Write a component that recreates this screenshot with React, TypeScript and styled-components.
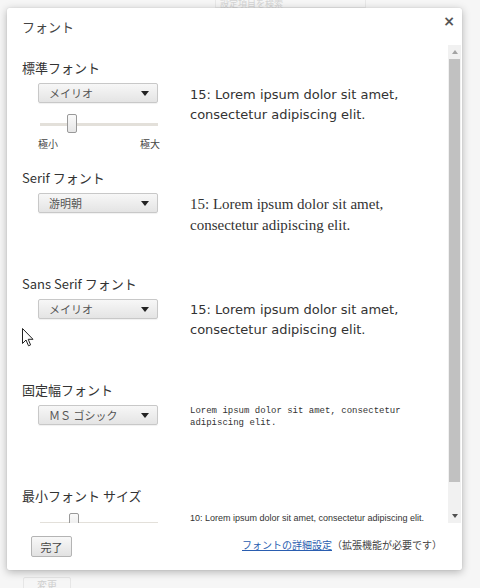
import React from 'react'
import styled, { createGlobalStyle } from 'styled-components'

const GlobalStyle = createGlobalStyle`
  html, body {
    margin: 0;
    padding: 0;
    background: #f6f6f6;
  }
  body {
    font-family: 'Noto Sans CJK JP', 'DejaVu Sans', sans-serif;
    color: #333;
  }
`

const jp = `'Noto Sans CJK JP', sans-serif`

const Page = styled.div`
  position: relative;
  width: 480px;
  height: 588px;
  overflow: hidden;
  padding: 8px 0 0 7px;
  box-sizing: border-box;
`

const BackSearch = styled.div`
  position: absolute;
  top: -6px;
  left: 215px;
  width: 145px;
  height: 12px;
  border: 1px solid #e8e8e8;
  font-family: ${jp};
  font-size: 9px;
  color: #d4d4d4;
  padding-left: 4px;
  line-height: 18px;
`

const BackButton = styled.div`
  position: absolute;
  top: 577px;
  left: 23px;
  width: 46px;
  height: 18px;
  border: 1px solid #e6e6e6;
  border-radius: 2px;
  font-family: ${jp};
  font-size: 10px;
  color: #cfcfcf;
  text-align: center;
  line-height: 14px;
`

const Dialog = styled.div`
  width: 455px;
  height: 562px;
  background: #fff;
  border-radius: 2px;
  box-shadow: 0 2px 8px rgba(0, 0, 0, 0.28), 0 0 1px rgba(0, 0, 0, 0.2);
  display: flex;
  flex-direction: column;
  position: relative;
`

const Header = styled.div`
  display: flex;
  justify-content: space-between;
  align-items: center;
  height: 37px;
  padding: 0 7px 0 15px;
`

const Title = styled.h1`
  margin: 0;
  font-family: ${jp};
  font-weight: normal;
  font-size: 13px;
  color: #444;
  margin-top: -1px;
`

const Close = styled.span`
  font-family: 'DejaVu Sans', sans-serif;
  font-weight: bold;
  font-size: 14px;
  color: #555;
  margin-top: -12px;
`

const Body = styled.div`
  display: flex;
  height: 478px;
`

const Scroller = styled.div`
  flex: 1;
  overflow: hidden;
  padding: 14px 0 0 15px;
`

const Section = styled.div<{ $height: number }>`
  height: ${(p) => p.$height}px;
`

const SectionTitle = styled.div`
  font-family: ${jp};
  font-size: 13px;
  color: #333;
  line-height: 18px;
`

const Row = styled.div`
  display: grid;
  grid-template-columns: 168px 1fr;
  margin-top: 6px;
`

const Controls = styled.div`
  padding-left: 16px;
`

const Select = styled.div`
  width: 120px;
  height: 20px;
  box-sizing: border-box;
  border: 1px solid #c8c8c8;
  border-radius: 2px;
  background: linear-gradient(#f7f7f7, #e4e4e4);
  display: flex;
  align-items: center;
  justify-content: space-between;
  padding: 0 8px 0 10px;
  font-family: ${jp};
  font-size: 11px;
  color: #555;
  box-shadow: 0 1px 1px rgba(0, 0, 0, 0.06);
`

const Arrow = styled.span`
  width: 0;
  height: 0;
  border-left: 4px solid transparent;
  border-right: 4px solid transparent;
  border-top: 5px solid #222;
`

const Slider = styled.div<{ $thumb: number; $top: number }>`
  position: relative;
  width: 120px;
  height: 20px;
  margin-top: ${(p) => p.$top}px;
  &::before {
    content: '';
    position: absolute;
    left: 2px;
    right: 0;
    top: 9px;
    height: 3px;
    background: #e3e0da;
  }
  &::after {
    content: '';
    position: absolute;
    left: ${(p) => p.$thumb}px;
    top: 0;
    width: 8px;
    height: 17px;
    border: 1px solid #999;
    border-radius: 2px;
    background: linear-gradient(#fafafa, #e6e6e6);
  }
`

const Ends = styled.div`
  display: flex;
  justify-content: space-between;
  width: 122px;
  font-family: ${jp};
  font-size: 10px;
  color: #444;
  margin-top: 2px;
`

const Sample = styled.div<{ $font: string; $size: number; $lh: number; $pt: number }>`
  font-family: ${(p) => p.$font};
  font-size: ${(p) => p.$size}px;
  line-height: ${(p) => p.$lh}px;
  padding-top: ${(p) => p.$pt}px;
  padding-right: 12px;
  color: #333;
`

const ScrollBar = styled.div`
  width: 13px;
  background: #f1f1f1;
  display: flex;
  flex-direction: column;
  margin-right: 1px;
`

const ScrollButton = styled.div<{ $down?: boolean }>`
  height: 14px;
  display: flex;
  align-items: center;
  justify-content: center;
  &::after {
    content: '';
    border-left: 3px solid transparent;
    border-right: 3px solid transparent;
    ${(p) => (p.$down ? 'border-top: 4px solid #505050;' : 'border-bottom: 4px solid #a3a3a3;')}
  }
`

const Thumb = styled.div`
  height: 423px;
  margin: 0 1px;
  background: #c1c1c1;
`

const Spacer = styled.div`
  flex: 1;
`

const Footer = styled.div`
  display: flex;
  align-items: center;
  justify-content: space-between;
  padding: 13px 20px 0 24px;
`

const Button = styled.button`
  width: 41px;
  height: 21px;
  padding: 0;
  border: 1px solid #b4b4b4;
  border-radius: 2px;
  background: linear-gradient(#f8f8f8, #e2e2e2);
  font-family: ${jp};
  font-size: 11px;
  color: #444;
`

const Note = styled.div`
  font-family: ${jp};
  font-size: 10px;
  color: #444;
  margin-top: -4px;
`

const Link = styled.a`
  color: #2a5db0;
  text-decoration: underline;
`

const Cursor = styled.svg`
  position: absolute;
  left: 15px;
  top: 320px;
`

const SAMPLE = '15: Lorem ipsum dolor sit amet, consectetur adipiscing elit.'
const sans = `'DejaVu Sans', sans-serif`

export default function App() {
  return (
    <Page>
      <GlobalStyle />
      <BackSearch>設定項目を検索</BackSearch>
      <BackButton>変更</BackButton>
      <Dialog>
        <Header>
          <Title>フォント</Title>
          <Close>×</Close>
        </Header>
        <Body>
          <Scroller>
            <Section $height={110}>
              <SectionTitle>標準フォント</SectionTitle>
              <Row>
                <Controls>
                  <Select>
                    メイリオ
                    <Arrow />
                  </Select>
                  <Slider $thumb={29} $top={11} />
                  <Ends>
                    <span>極小</span>
                    <span>極大</span>
                  </Ends>
                </Controls>
                <Sample $font={sans} $size={13} $lh={20} $pt={2}>
                  {SAMPLE}
                </Sample>
              </Row>
            </Section>
            <Section $height={106}>
              <SectionTitle>Serif フォント</SectionTitle>
              <Row>
                <Controls>
                  <Select>
                    游明朝
                    <Arrow />
                  </Select>
                </Controls>
                <Sample $font={`'Liberation Serif', serif`} $size={15} $lh={21} $pt={1}>
                  {SAMPLE}
                </Sample>
              </Row>
            </Section>
            <Section $height={106}>
              <SectionTitle>Sans Serif フォント</SectionTitle>
              <Row>
                <Controls>
                  <Select>
                    メイリオ
                    <Arrow />
                  </Select>
                </Controls>
                <Sample $font={sans} $size={13} $lh={20} $pt={1}>
                  {SAMPLE}
                </Sample>
              </Row>
            </Section>
            <Section $height={106}>
              <SectionTitle>固定幅フォント</SectionTitle>
              <Row>
                <Controls>
                  <Select>
                    ＭＳ ゴシック
                    <Arrow />
                  </Select>
                </Controls>
                <Sample $font={`'Liberation Mono', monospace`} $size={9} $lh={12} $pt={0}>
                  Lorem ipsum dolor sit amet, consectetur adipiscing elit.
                </Sample>
              </Row>
            </Section>
            <Section $height={60}>
              <SectionTitle>最小フォント サイズ</SectionTitle>
              <Row>
                <Controls>
                  <Slider $thumb={31} $top={2} />
                </Controls>
                <Sample $font={`'Liberation Sans', sans-serif`} $size={9} $lh={12} $pt={1}>
                  10: Lorem ipsum dolor sit amet, consectetur adipiscing elit.
                </Sample>
              </Row>
            </Section>
          </Scroller>
          <ScrollBar>
            <ScrollButton />
            <Thumb />
            <Spacer />
            <ScrollButton $down />
          </ScrollBar>
        </Body>
        <Footer>
          <Button>完了</Button>
          <Note>
            <Link>フォントの詳細設定</Link>（拡張機能が必要です）
          </Note>
        </Footer>
        <Cursor width="12" height="19" viewBox="0 0 12 19">
          <path
            d="M0.5 0.5 L0.5 15.5 L4 12 L6.5 17.8 L8.6 16.9 L6.2 11.3 L11 11.3 Z"
            fill="#fff"
            stroke="#222"
            strokeWidth="1"
          />
        </Cursor>
      </Dialog>
    </Page>
  )
}
